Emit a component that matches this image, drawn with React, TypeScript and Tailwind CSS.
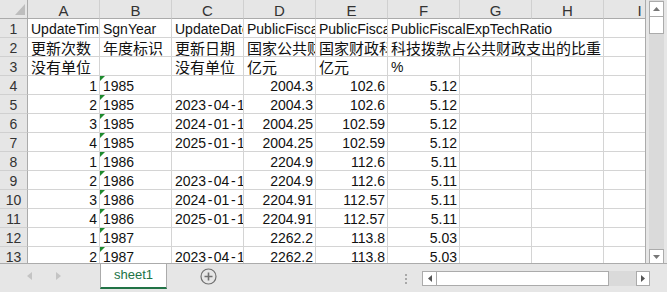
import clsx from 'clsx';

const COLS = ['A', 'B', 'C', 'D', 'E', 'F', 'G', 'H', 'I'];

const ROWS: string[][] = [
  ['UpdateTime', 'SgnYear', 'UpdateDate', 'PublicFiscalExpTech', 'PublicFiscalTechExp', 'PublicFiscalExpTechRatio'],
  ['更新次数', '年度标识', '更新日期', '国家公共财政支出', '国家财政科技拨款', '科技拨款占公共财政支出的比重'],
  ['没有单位', '', '没有单位', '亿元', '亿元', '%'],
  ['1', '1985', '', '2004.3', '102.6', '5.12'],
  ['2', '1985', '2023-04-18', '2004.3', '102.6', '5.12'],
  ['3', '1985', '2024-01-15', '2004.25', '102.59', '5.12'],
  ['4', '1985', '2025-01-16', '2004.25', '102.59', '5.12'],
  ['1', '1986', '', '2204.9', '112.6', '5.11'],
  ['2', '1986', '2023-04-18', '2204.9', '112.6', '5.11'],
  ['3', '1986', '2024-01-15', '2204.91', '112.57', '5.11'],
  ['4', '1986', '2025-01-16', '2204.91', '112.57', '5.11'],
  ['1', '1987', '', '2262.2', '113.8', '5.03'],
  ['2', '1987', '2023-04-18', '2262.2', '113.8', '5.03'],
];

// cells whose text spills into the empty neighbours (no gridline on the right)
const SPILL = new Set(['0-5', '0-6', '1-5', '1-6']);

const FONT = '[font-family:"Liberation_Sans","Noto_Sans_CJK_SC",sans-serif]';

function Cell({ value, row, col }: { value: string; row: number; col: number }) {
  const numeric = col !== 1 && /^[\d.]+$/.test(value);
  const cjk = /[\u4e00-\u9fff]/.test(value);
  const date = /^\d{4}-\d\d-\d\d$/.test(value);
  const spill = SPILL.has(`${row}-${col}`);
  const marked = col === 1 && row >= 3;

  return (
    <div
      className={clsx(
        'relative h-[19px] whitespace-nowrap border-b border-[#d4d4d4] text-[#111] leading-[21px]',
        spill ? 'overflow-visible' : 'overflow-hidden border-r',
        numeric ? 'text-right pr-[2px]' : 'pl-[3px]',
        cjk ? 'text-[15px]' : 'text-[14px]'
      )}
    >
      {marked && (
        <svg className="absolute left-0 top-0" width="5" height="5" viewBox="0 0 5 5">
          <path d="M0 0H5L0 5Z" fill="#1e8a2e" />
        </svg>
      )}
      {date
        ? value.split('-').map((part, i) => (
            <span key={i}>
              {i > 0 && <span className="px-[1.5px]">-</span>}
              {part}
            </span>
          ))
        : value}
    </div>
  );
}

export default function App() {
  return (
    <div className={clsx('flex h-[292px] w-[667px] flex-col overflow-hidden bg-[#e6e6e6]', FONT)}>
      <div className="flex h-[264px] border-b border-[#ababab]">
        {/* Sheet */}
        <div className="w-[646px] overflow-hidden border-r border-[#ababab] bg-white">
          <div className="grid w-[676px] grid-cols-[28px_repeat(9,72px)]">
            <div className="relative h-[19px] border-b border-r border-[#ababab] bg-[#e6e6e6]">
              <svg className="absolute left-[15px] top-[4px]" width="10" height="11" viewBox="0 0 10 11">
                <path d="M10 0V11H0Z" fill="#bdbdbd" />
              </svg>
            </div>
            {COLS.map((c) => (
              <div
                key={c}
                className="h-[19px] border-b border-r border-b-[#ababab] border-r-[#d0d0d0] bg-[#e6e6e6] text-center text-[15px] leading-[22px] text-[#333]"
              >
                {c}
              </div>
            ))}

            {ROWS.map((row, r) => (
              <div key={r} className="contents">
                <div className="h-[19px] border-b border-r border-b-[#d0d0d0] border-r-[#ababab] bg-[#e6e6e6] text-center text-[14px] leading-[21px] text-[#333]">
                  {r + 1}
                </div>
                {COLS.map((_, c) => (
                  <Cell key={c} value={row[c] ?? ''} row={r} col={c} />
                ))}
              </div>
            ))}
          </div>
        </div>

        {/* Vertical scrollbar */}
        <div className="flex w-[21px] pl-[3px] pr-[3px]">
          <div className="flex w-[15px] flex-col bg-[#dadada] pt-[1px]">
            <div className="flex h-[16px] items-center justify-center border border-[#ababab] bg-white">
              <svg width="7" height="4" viewBox="0 0 7 4">
                <path d="M0 4L3.5 0L7 4Z" fill="#777" />
              </svg>
            </div>
            <div className="h-[17px] border border-t-0 border-[#ababab] bg-white" />
            <div className="flex-1" />
            <div className="flex h-[14px] items-center justify-center border border-b-0 border-[#ababab] bg-white">
              <svg width="7" height="4" viewBox="0 0 7 4">
                <path d="M0 0L3.5 4L7 0Z" fill="#777" />
              </svg>
            </div>
          </div>
        </div>
      </div>

      {/* Sheet tabs + horizontal scrollbar */}
      <div className="flex h-[28px] items-start">
        <div className="flex h-[24px] w-[100px] items-center gap-[24px] pl-[27px]">
          <svg width="5" height="8" viewBox="0 0 5 8">
            <path d="M5 0V8L0 4Z" fill="#c4c4c4" />
          </svg>
          <svg width="5" height="8" viewBox="0 0 5 8">
            <path d="M0 0V8L5 4Z" fill="#c4c4c4" />
          </svg>
        </div>
        <div className="flex h-[25px] w-[67px] items-center justify-center border-x border-b-2 border-x-[#ababab] border-b-[#217346] bg-white pb-[1px] text-[13px] text-[#217346]">
          sheet1
        </div>
        <div className="flex h-[25px] w-[83px] items-center justify-center">
          <svg width="17" height="17" viewBox="0 0 17 17">
            <circle cx="8.5" cy="8.5" r="7.5" fill="none" stroke="#707070" strokeWidth="1.2" />
            <path d="M8.5 4.5V12.5M4.5 8.5H12.5" stroke="#707070" strokeWidth="1.6" />
          </svg>
        </div>
        <div className="flex-1" />
        <div className="mr-[17px] mt-[7px] flex h-[15px] items-center">
          <div className="mr-[15px] flex flex-col gap-[2px]">
            <span className="block h-[2px] w-[2px] bg-[#a8a8a8]" />
            <span className="block h-[2px] w-[2px] bg-[#a8a8a8]" />
            <span className="block h-[2px] w-[2px] bg-[#a8a8a8]" />
          </div>
          <div className="flex h-[15px] w-[228px] bg-[#dadada]">
            <div className="flex w-[15px] items-center justify-center border border-[#ababab] bg-white">
              <svg width="4" height="7" viewBox="0 0 4 7">
                <path d="M4 0V7L0 3.5Z" fill="#555" />
              </svg>
            </div>
            <div className="w-[172px] border border-l-0 border-[#ababab] bg-white" />
            <div className="flex-1" />
            <div className="flex w-[14px] items-center justify-center border border-[#ababab] bg-white">
              <svg width="4" height="7" viewBox="0 0 4 7">
                <path d="M0 0V7L4 3.5Z" fill="#555" />
              </svg>
            </div>
          </div>
        </div>
      </div>
    </div>
  );
}
